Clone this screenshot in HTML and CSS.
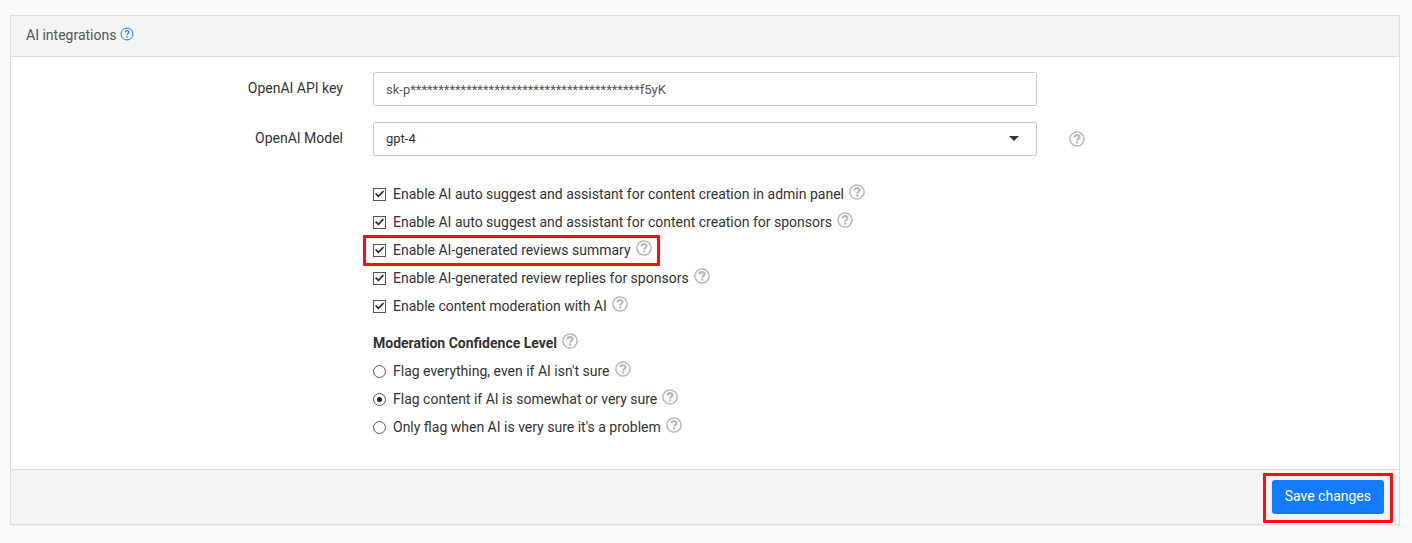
FILE: index.html
```html
<!DOCTYPE html>
<html lang="en">
<head>
    <meta charset="UTF-8">
    <meta name="viewport" content="width=device-width, initial-scale=1.0">
    <title>AI integrations</title>
    <link rel="stylesheet" href="styles.css">
</head>
<body>
    <!-- Shared help icons -->
    <svg class="sprite" aria-hidden="true">
        <symbol id="icon-help" viewBox="0 0 16 16">
            <circle cx="8" cy="8" r="7.1" fill="none" stroke="currentColor" stroke-width="1.5"/>
            <path d="M5.5 6.3C5.6 4.8 6.6 4.2 8 4.2c1.5 0 2.5.8 2.5 2 0 1.7-2.3 1.6-2.3 3.4" fill="none" stroke="currentColor" stroke-width="2.2"/>
            <rect x="7.1" y="10.4" width="2.2" height="2.2" fill="currentColor"/>
        </symbol>
        <symbol id="icon-info" viewBox="0 0 14 14">
            <circle cx="7" cy="7" r="6" fill="none" stroke="currentColor"/>
            <path d="M5.2 5.4C5.2 4.3 6 3.7 7 3.7s1.8.6 1.8 1.6c0 1.3-1.7 1.4-1.7 2.9" fill="none" stroke="currentColor" stroke-width="1.2"/>
            <rect x="6.4" y="9.2" width="1.3" height="1.3" fill="currentColor"/>
        </symbol>
    </svg>

    <form class="panel">
        <div class="panel-heading">
            <span>AI integrations</span>
            <a href="#" class="info" aria-label="Help"><svg><use href="#icon-info"/></svg></a>
        </div>

        <div class="panel-body">
            <div class="form-row">
                <label class="control-label" for="api-key">OpenAI API key</label>
                <div class="field">
                    <input type="text" class="form-control" id="api-key" value="sk-p*****************************************f5yK">
                </div>
            </div>

            <div class="form-row">
                <label class="control-label" for="model">OpenAI Model</label>
                <div class="field select-wrap">
                    <select class="form-control" id="model">
                        <option selected>gpt-4</option>
                    </select>
                </div>
                <div class="field-help">
                    <a href="#" class="help" aria-label="Help"><svg><use href="#icon-help"/></svg></a>
                </div>
            </div>

            <div class="options">
                <div class="option">
                    <label><input type="checkbox" checked>Enable AI auto suggest and assistant for content creation in admin panel</label>
                    <a href="#" class="help" aria-label="Help"><svg><use href="#icon-help"/></svg></a>
                </div>
                <div class="option">
                    <label><input type="checkbox" checked>Enable AI auto suggest and assistant for content creation for sponsors</label>
                    <a href="#" class="help" aria-label="Help"><svg><use href="#icon-help"/></svg></a>
                </div>
                <div class="option marked">
                    <label><input type="checkbox" checked>Enable AI-generated reviews summary</label>
                    <a href="#" class="help" aria-label="Help"><svg><use href="#icon-help"/></svg></a>
                </div>
                <div class="option">
                    <label><input type="checkbox" checked>Enable AI-generated review replies for sponsors</label>
                    <a href="#" class="help" aria-label="Help"><svg><use href="#icon-help"/></svg></a>
                </div>
                <div class="option">
                    <label><input type="checkbox" checked>Enable content moderation with AI</label>
                    <a href="#" class="help" aria-label="Help"><svg><use href="#icon-help"/></svg></a>
                </div>
            </div>

            <div class="options" role="radiogroup" aria-labelledby="confidence">
                <div class="option">
                    <strong id="confidence">Moderation Confidence Level</strong>
                    <a href="#" class="help" aria-label="Help"><svg><use href="#icon-help"/></svg></a>
                </div>
                <div class="option">
                    <label><input type="radio" name="level">Flag everything, even if AI isn't sure</label>
                    <a href="#" class="help" aria-label="Help"><svg><use href="#icon-help"/></svg></a>
                </div>
                <div class="option">
                    <label><input type="radio" name="level" checked>Flag content if AI is somewhat or very sure</label>
                    <a href="#" class="help" aria-label="Help"><svg><use href="#icon-help"/></svg></a>
                </div>
                <div class="option">
                    <label><input type="radio" name="level">Only flag when AI is very sure it's a problem</label>
                    <a href="#" class="help" aria-label="Help"><svg><use href="#icon-help"/></svg></a>
                </div>
            </div>
        </div>

        <div class="panel-footer">
            <div class="save marked">
                <button type="submit" class="btn">Save changes</button>
            </div>
        </div>
    </form>
</body>
</html>
```
FILE: styles.css
```css
* {
    box-sizing: border-box;
}

body {
    margin: 0;
    padding: 15px 12px 18px 10px;
    background: #fafafa;
    color: #333;
    font-family: Roboto, sans-serif;
    font-size: 14px;
    line-height: 20px;
}

.sprite {
    display: none;
}

.panel {
    background: #fff;
    border: 1px solid #ddd;
    box-shadow: 0 1px 1px rgba(0, 0, 0, 0.05);
}

.panel-heading {
    display: flex;
    align-items: flex-start;
    gap: 4px;
    padding: 9px 15px 11px;
    background: #f4f4f4;
    border-bottom: 1px solid #ddd;
    color: #555;
}

.info svg {
    display: block;
    width: 14px;
    height: 14px;
    margin-top: 2px;
    color: #147bfc;
}

.panel-body {
    padding: 15px 0 27px;
}

.form-row {
    display: flex;
    margin-bottom: 16px;
}

.control-label {
    width: 25%;
    padding: 6px 15px 8px;
    text-align: right;
}

.field {
    width: 50%;
    padding: 0 15px;
}

.field-help {
    display: flex;
    align-items: center;
    padding-left: 17px;
}

.form-control {
    display: block;
    width: 100%;
    height: 34px;
    padding: 6px 12px;
    border: 1px solid #ccc;
    border-radius: 2px;
    background: #fff;
    color: #555;
    font: inherit;
    font-size: 13px;
}

select.form-control {
    appearance: none;
    color: #333;
}

.select-wrap {
    position: relative;
}

/* drop-down arrow */
.select-wrap::after {
    content: "";
    position: absolute;
    top: 14px;
    right: 33px;
    border: 5px solid transparent;
    border-top-color: #333;
    border-bottom: 0;
    pointer-events: none;
}

.options {
    display: flex;
    flex-direction: column;
    align-items: flex-start;
    gap: 8px;
    margin-left: 25%;
    padding: 12px 15px 5px;
}

.option {
    display: flex;
    align-items: flex-start;
    gap: 5px;
}

.option label {
    display: flex;
    align-items: center;
    gap: 7px;
}

.help svg {
    display: block;
    width: 16px;
    height: 16px;
    color: #b9b9b9;
}

input[type="checkbox"],
input[type="radio"] {
    appearance: none;
    position: relative;
    width: 13px;
    height: 13px;
    margin: 0;
    border: 1px solid #555;
    background: #fff;
}

input[type="radio"] {
    border-radius: 50%;
}

/* tick */
input[type="checkbox"]:checked::before {
    content: "";
    position: absolute;
    inset: 1px;
    background: #222;
    clip-path: polygon(0 50%, 12% 38%, 38% 64%, 88% 12%, 100% 24%, 38% 88%);
}

input[type="radio"]:checked::before {
    content: "";
    position: absolute;
    inset: 3px;
    border-radius: 50%;
    background: #222;
}

.marked {
    position: relative;
}

/* red frame around a highlighted item */
.marked::after {
    content: "";
    position: absolute;
    inset: -5px -8px -6px -10px;
    border: 3px solid #ff0b10;
    border-radius: 1px;
    pointer-events: none;
}

.save.marked::after {
    inset: -7px -9px -9px -9px;
}

.panel-footer {
    display: flex;
    justify-content: flex-end;
    padding: 10px 15px;
    background: #f4f4f4;
    border-top: 1px solid #ddd;
}

.btn {
    display: block;
    height: 34px;
    padding: 6px 13px 8px;
    border: 0;
    border-radius: 3px;
    background: #147bfc;
    color: #fff;
    font: inherit;
    cursor: pointer;
}
```
